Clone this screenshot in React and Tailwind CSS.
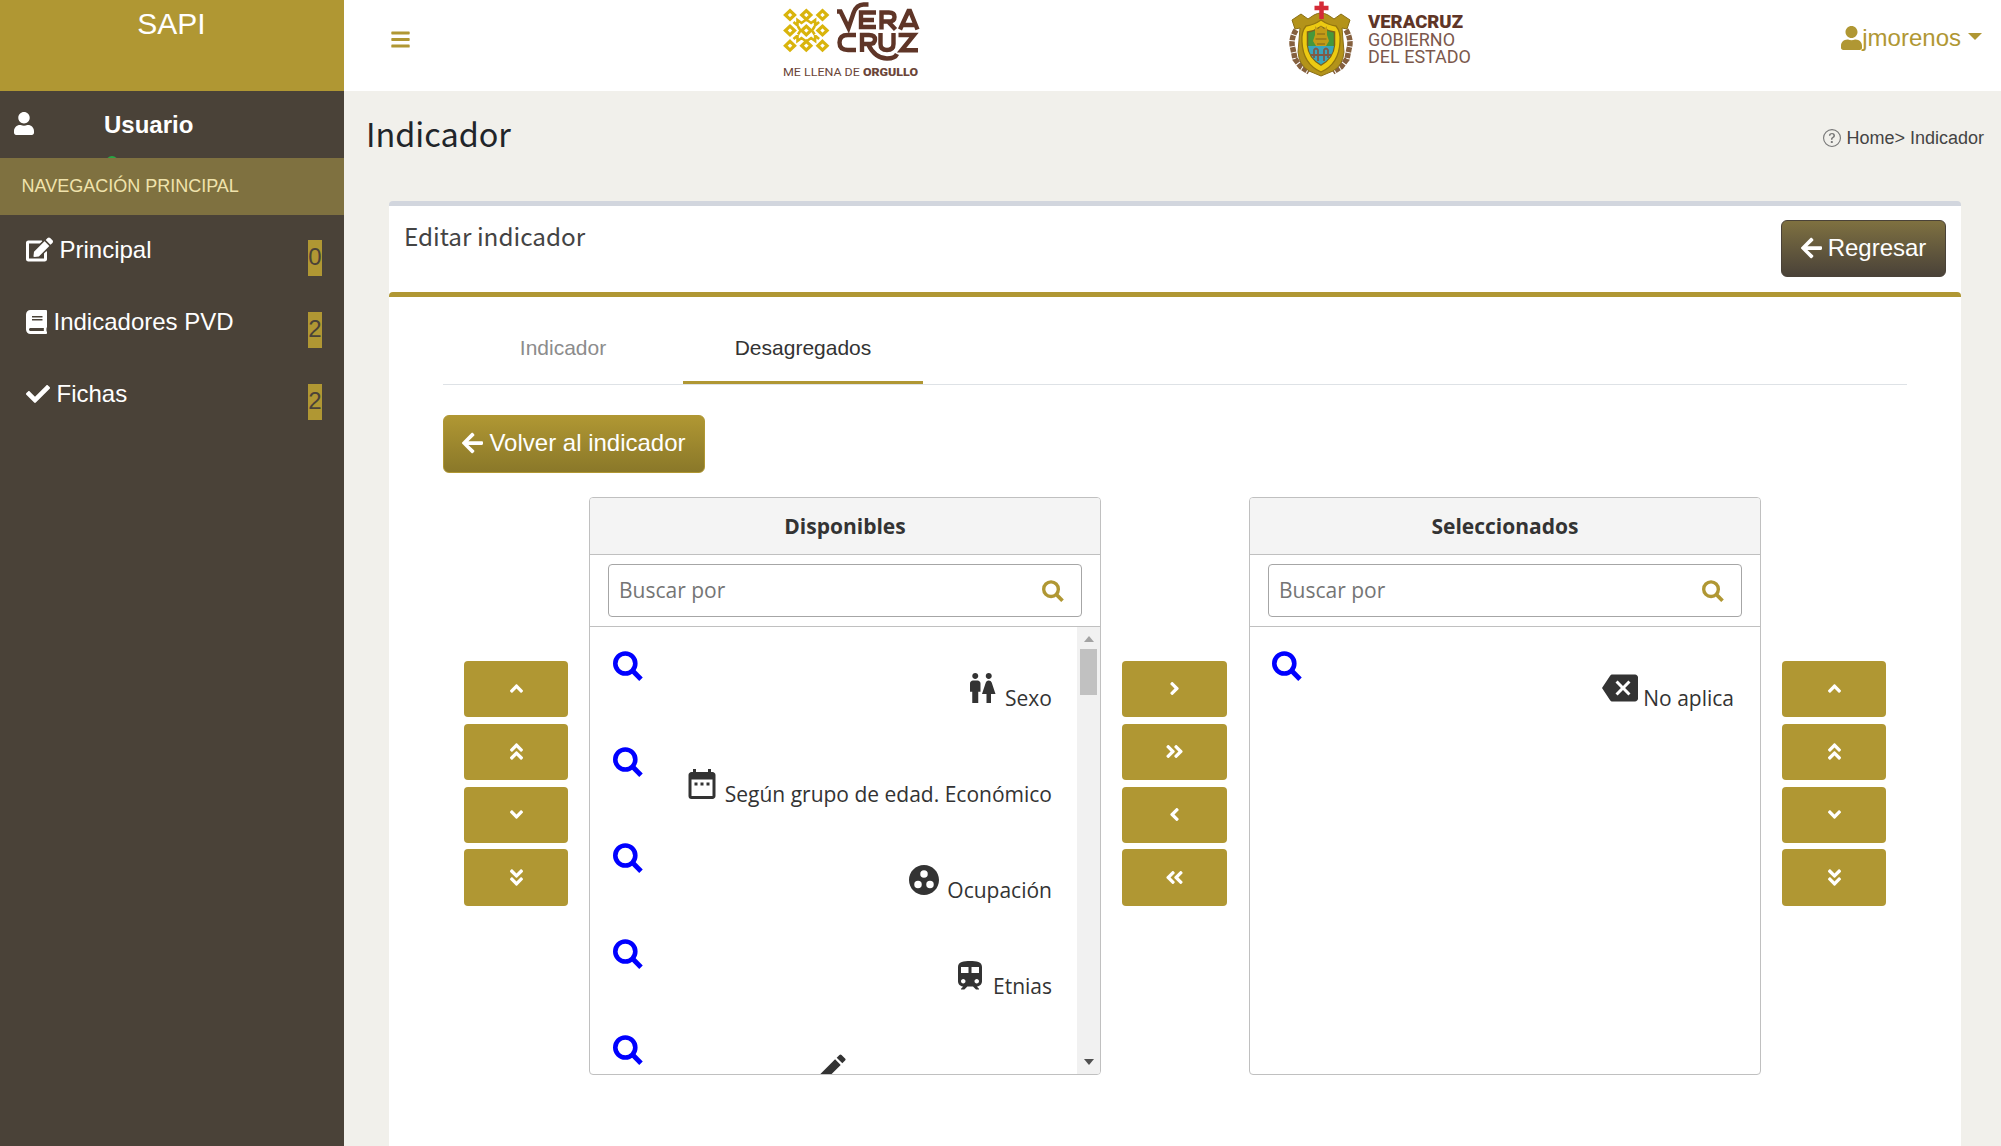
import React from 'react';
import { FaUser, FaEdit, FaBook, FaCheck, FaArrowLeft, FaBars, FaAngleUp, FaAngleDown, FaAngleLeft, FaAngleRight, FaAngleDoubleUp, FaAngleDoubleDown, FaAngleDoubleLeft, FaAngleDoubleRight } from 'react-icons/fa';
import { MdWc, MdDateRange, MdGroupWork, MdEdit, MdBackspace } from 'react-icons/md';
import { BsQuestionCircle } from 'react-icons/bs';

const menu = [
  { icon: FaEdit, label: 'Principal', count: '0', size: 'size-[27px]' },
  { icon: FaBook, label: 'Indicadores PVD', count: '2', size: 'h-6 w-[21px]' },
  { icon: FaCheck, label: 'Fichas', count: '2', size: 'size-6' },
];

function SearchIcon({ className }) {
  return (
    <svg className={className} viewBox="0 0 30 30" fill="none" stroke="currentColor" strokeWidth="4.6">
      <circle cx="12.3" cy="12.5" r="10" />
      <path d="M20.4 20.600L28 28.200" strokeWidth="5" />
    </svg>
  );
}

function TrainIcon({ className }) {
  return (
    <svg className={className} viewBox="0 0 24 24" fill="currentColor">
      <path d="M12 2c-4 0-8 .5-8 4v9.500C4 17.430 5.570 19 7.500 19L6 20.500v.5h2.230l2-2H14l2 2h2v-.5L16.500 19c1.930 0 3.500-1.570 3.500-3.500V6c0-3.500-3.580-4-8-4zM7.500 17c-.83 0-1.500-.67-1.500-1.500S6.670 14 7.500 14s1.500.67 1.500 1.500S8.330 17 7.500 17zm3.500-7H6V6h5v4zm2 0V6h5v4h-5zm3.500 7c-.83 0-1.500-.67-1.500-1.500s.67-1.500 1.500-1.500 1.500.67 1.500 1.500-.67 1.500-1.500 1.500z" />
    </svg>
  );
}

function Sidebar() {
  return (
    <aside className="flex w-[344px] shrink-0 flex-col bg-[#4a4238] text-white">
      <div className="h-[91px] shrink-0 bg-[#b09733] pr-px pt-px text-center text-[30px] leading-[45px]">SAPI</div>
      <div className="relative flex h-[66.5px] shrink-0 overflow-hidden pl-[14px] pt-[21px]">
        <FaUser className="h-[23px] w-[20px]" />
        <div className="pl-[70px] text-2xl font-bold leading-[26px]">Usuario</div>
        <span className="absolute left-[106px] top-[65px] size-3 rounded-full bg-[#28a745]" />
      </div>
      <div className="flex h-[57px] shrink-0 items-center bg-[#7f7140] pl-[21.500px] text-lg text-[#f0e3ac]">NAVEGACIÓN PRINCIPAL</div>
      <nav className="pt-[0.500px]">
        {menu.map(({ icon: Icon, label, count, size }) => (
          <div key={label} className="flex h-[72px] justify-between pl-[26px] pr-[22px] pt-[17px]">
            <div className="flex h-[35px] items-center gap-[6.500px] text-2xl">
              <Icon className={size} />
              <span>{label}</span>
            </div>
            <span className="mt-2 h-9 w-[14px] bg-[#b09733] text-center text-2xl leading-[34px] text-[#4a4238]">{count}</span>
          </div>
        ))}
      </nav>
    </aside>
  );
}

const knots = [[7, 15], [23.3, 15], [39.5, 15], [7, 30.5], [23.3, 30.5], [39.5, 30.5], [7, 45.7], [23.3, 45.7], [39.5, 45.7]];

function VeracruzLogo() {
  return (
    <svg className="h-[80px] w-[140px]" viewBox="0 0 140 80">
      <g fill="none" stroke="#d9b40c" strokeWidth="3.2">
        {knots.map(([x, y]) => (
          <path key={x + '-' + y} d={`M${x} ${y - 4.400}l4.600 4.400-4.600 4.400-4.600-4.400z`} />
        ))}
        <path d="M10.500 22l4 3.500V20l4 3 4.800-3.500 4.800 3.500 4-3v5.500l4-3.500M10.500 39l4-3.500V41l4-3 4.800 3.500 4.800-3.500 4 3v-5.500l4 3.500M15 26.500l2.500 4-2.500 4M31.600 26.500l-2.500 4 2.500 4" strokeWidth="2.6" />
      </g>
      <g fill="none" stroke="#5f3527" strokeWidth="4.4">
        <path d="M54 11.500h3.500l8 16.500 5-15q3-8.500 10-8.500h5" />
        <path d="M93 12.500H78v14.500h15M78 20h13" />
        <path d="M98.500 29.500V12.500h7.500q5.500 0 5.500 4.500t-5.500 4.500h-6M105 21.500l7.500 8" />
        <path d="M117 29.500l8.500-18.500h1.500l7.500 18.500M119.500 25h12" />
        <path d="M73 35h-8q-8.500 0-8.500 7.500t8.500 7.500h8" />
        <path d="M79 52V35h7q6 0 6 4.500t-6 4.500h-6M85 44q7 14.500 19 14.500 8 0 10-4.500" />
        <path d="M97.500 33v11q0 6 6.500 6t6.500-6V33" />
        <path d="M115.500 35H131l-12.500 15.300H135" />
      </g>
      <text x="0" y="76" textLength="135" lengthAdjust="spacingAndGlyphs" fill="#6b4538" fontFamily="Roboto" fontSize="11.3">
        ME LLENA DE <tspan fontWeight="900">ORGULLO</tspan>
      </text>
    </svg>
  );
}

function EstadoLogo() {
  return (
    <svg className="h-[80px] w-[184px]" viewBox="0 0 184 80">
      <path d="M7 30q-6 10-3 19l2 10 6 8 8 5M57 30q6 10 3 19l-2 10-6 8-8 5" fill="none" stroke="#85603f" strokeWidth="5.5" strokeDasharray="5 1" />
      <path d="M3 20l9-6 7 5 6-4q7-4 14 0l6 4 7-5 9 6-3 9-5-1 2 24q-1 13-11 19l-12 5-12-5Q10 65 9 52l2-24-5 1z" fill="#b3931a" stroke="#8a6f16" strokeWidth="1" />
      <path d="M17 26q8-1 15-6 7 5 15 6 5 6 4 16-1 22-19 30Q14 64 13 42q-1-10 4-16z" fill="#ecca12" stroke="#93760f" strokeWidth="1.3" />
      <path d="M18.500 32q7-1 13.500-5.500Q38.500 31 45.500 32v13q-1 13-13.500 20-12.500-7-13.500-20z" fill="#46973b" stroke="#7a621c" strokeWidth="1.5" />
      <path d="M19 46h26q-1.500 12-13 18.500Q20.500 58 19 46z" fill="#3aa5bd" />
      <path d="M26 26l3 3 3-3 3 3 3-3v9l2 6-3 5H27l-3-5 2-6z" fill="#c49c17" />
      <path d="M28 34h8M26.500 39h11M28 44h8" stroke="#80631a" strokeWidth="1.2" />
      <path d="M25 58v-8q2-3 4 0v11M35 61V50q2-3 4 0v8M22 55h20" fill="none" stroke="#7f5a48" strokeWidth="1.8" />
      <path d="M32.500 1.500V19M25.500 8h14" stroke="#d42a36" strokeWidth="4.5" />
      <text x="79" y="28.300" textLength="95" lengthAdjust="spacingAndGlyphs" fill="#5f3527" fontFamily="Roboto" fontSize="17.8" fontWeight="900">VERACRUZ</text>
      <text x="79" y="45.600" textLength="87" lengthAdjust="spacingAndGlyphs" fill="#7b584d" fontFamily="Roboto" fontSize="18">GOBIERNO</text>
      <text x="79" y="63.300" textLength="103" lengthAdjust="spacingAndGlyphs" fill="#7b584d" fontFamily="Roboto" fontSize="18">DEL ESTADO</text>
    </svg>
  );
}

function Header() {
  return (
    <header className="flex h-[91px] shrink-0 bg-white text-[#b09733]">
      <FaBars className="ml-[46px] mt-[29px] size-[21px]" />
      <div className="ml-[372px]"><VeracruzLogo /></div>
      <div className="ml-[366px]"><EstadoLogo /></div>
      <div className="ml-auto mr-[19px] mt-[20px] flex h-9 items-center text-2xl">
        <FaUser className="h-6 w-[21px]" />
        <span>jmorenos</span>
        <span className="mb-1 ml-[7px] border-x-[7px] border-t-[7px] border-x-transparent border-t-[#b09733]" />
      </div>
    </header>
  );
}

function Controls({ icons, className }) {
  return (
    <div className={'flex flex-col gap-[6.500px] pt-[164px] ' + className}>
      {icons.map((Icon, i) => (
        <button key={i} className="flex h-[56.300px] items-center justify-center rounded-[4px] bg-[#b09733] pb-px text-white">
          <Icon className="size-[21px]" />
        </button>
      ))}
    </div>
  );
}

const vertical = [FaAngleUp, FaAngleDoubleUp, FaAngleDown, FaAngleDoubleDown];
const horizontal = [FaAngleRight, FaAngleDoubleRight, FaAngleLeft, FaAngleDoubleLeft];

function Panel({ title, items, scroll, className }) {
  return (
    <section className={'flex h-[578px] w-[512px] flex-col overflow-hidden rounded-[4px] border-[1.5px] border-[#c0c0c0] font-["Open_Sans",sans-serif] text-[21px] text-[#333] ' + className}>
      <h3 className="flex h-[57px] shrink-0 items-center justify-center border-b-[1.5px] border-[#c0c0c0] bg-[#f4f4f4] pt-px font-bold">{title}</h3>
      <div className="h-[72px] shrink-0 border-b-[1.5px] border-[#c0c0c0] px-[18px] pt-[9px]">
        <div className="flex h-[53px] items-center justify-between rounded-[4px] border-[1.5px] border-[#a6a6a6] pl-[10px] pr-[17px] text-[#757575]">
          <span>Buscar por</span>
          <SearchIcon className="size-[22px] text-[#b09733]" />
        </div>
      </div>
      <div className="flex min-h-0 flex-1">
        <ul className="min-w-0 flex-1 overflow-hidden">
          {items.map(({ icon: Icon, label }, i) => (
            <li key={i} className={'flex h-24 justify-between pt-[24px] ' + (scroll ? 'pl-[23px] pr-[25px]' : 'pl-[22px] pr-[26px]')}>
              <SearchIcon className="size-[30px] shrink-0 text-[#0000ff]" />
              <div className="flex h-[62px] items-end gap-[5px]">
                <Icon className={label ? 'mb-[7px] size-9' : 'mb-[11px] size-9'} />
                {label ? <span className="whitespace-nowrap leading-[29px]">{label}</span> : <span className="w-[197px]" />}
              </div>
            </li>
          ))}
        </ul>
        {scroll && (
          <div className="flex w-[23px] flex-col items-center justify-between bg-[#f1f1f1] pb-[9px] pt-[9px]">
            <div className="flex flex-col items-center gap-[7px]">
              <span className="border-x-[5.5px] border-b-[6px] border-x-transparent border-b-[#a3a3a3]" />
              <span className="h-[46px] w-[17px] bg-[#c1c1c1]" />
            </div>
            <span className="border-x-[5.5px] border-t-[6px] border-x-transparent border-t-[#505050]" />
          </div>
        )}
      </div>
    </section>
  );
}

const available = [
  { icon: MdWc, label: 'Sexo' },
  { icon: MdDateRange, label: 'Según grupo de edad. Económico' },
  { icon: MdGroupWork, label: 'Ocupación' },
  { icon: TrainIcon, label: 'Etnias' },
  { icon: MdEdit },
];
const selected = [{ icon: MdBackspace, label: 'No aplica' }];

export default function App() {
  return (
    <div className='flex h-[1146px] w-[2001px] overflow-hidden bg-[#f1f0eb] font-["Liberation_Sans",Arial,sans-serif]'>
      <Sidebar />
      <main className="flex min-w-0 flex-1 flex-col">
        <Header />
        <div className="flex h-[110px] shrink-0 justify-between pl-[22px] pr-[17px]">
          <h1 className='mt-[15px] font-["Noto_Sans_CJK_SC",sans-serif] text-[32.400px] leading-[54px] text-[#212529]'>Indicador</h1>
          <div className="mt-[33px] flex h-[27px] items-center gap-[5px] text-lg text-[#444]">
            <BsQuestionCircle className="size-[18px] text-[#777]" />
            <span>Home&gt; Indicador</span>
          </div>
        </div>
        <div className="ml-[45px] flex w-[1572px] flex-1 flex-col rounded-t-[4px] border-t-[5px] border-[#d2d6de] bg-white">
          <div className="flex h-[86px] shrink-0 justify-between pl-[15px] pr-[15px] pt-[14px]">
            <h2 className='font-["Noto_Sans_CJK_SC",sans-serif] text-[24.300px] leading-[32px] text-[#444]'>Editar indicador</h2>
            <button className="flex h-[57px] w-[165px] items-center justify-center gap-[6px] rounded-[6px] border-[1.5px] border-[#4a4238] bg-linear-to-b from-[#7f7140] to-[#4a4238] pb-px text-2xl text-white">
              <FaArrowLeft className="h-6 w-[21px]" />
              Regresar
            </button>
          </div>
          <div className="flex-1 rounded-t-[4px] border-t-[5px] border-[#b09733] pl-[54px]">
            <div className="flex h-[88px] w-[1464px] border-b-[1.5px] border-[#dee2e6] text-[21px]">
              <div className="flex w-[240px] justify-center pt-[35px] text-[#8c8c8c]">Indicador</div>
              <div className="flex w-[240px] justify-center border-b-[3px] border-[#b09733] pt-[35px] text-[#333]">Desagregados</div>
            </div>
            <button className="mt-[30px] flex h-[58px] w-[262px] items-center justify-center gap-[6px] rounded-[6px] border-[1.5px] border-[#b09733] bg-linear-to-b from-[#b09733] to-[#8a7829] pb-[2px] text-2xl text-white">
              <FaArrowLeft className="h-6 w-[21px]" />
              Volver al indicador
            </button>
            <div className="mt-6 flex">
              <Controls icons={vertical} className="ml-[21px] w-[104px]" />
              <Panel title="Disponibles" items={available} scroll className="ml-[21px]" />
              <Controls icons={horizontal} className="ml-[21px] w-[105px]" />
              <Panel title="Seleccionados" items={selected} className="ml-[22px]" />
              <Controls icons={vertical} className="ml-[21px] w-[104px]" />
            </div>
          </div>
        </div>
      </main>
    </div>
  );
}
